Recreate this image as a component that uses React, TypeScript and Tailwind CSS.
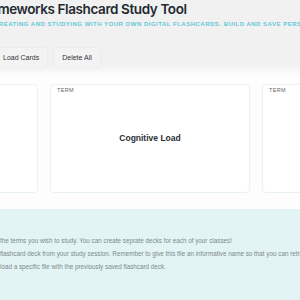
export default function App() {
  const notes = [
    "the terms you wish to study. You can create seprate decks for each of your classes!",
    "flashcard deck from your study session. Remember to give this file an informative name so that you can retrieve it later.",
    "load a specific file with the previously saved flashcard deck.",
  ];

  return (
    <div className="h-[300px] w-[300px] overflow-hidden bg-[#fcfdfc] font-['Liberation_Sans',Arial,sans-serif]">
      {/* header */}
      <div className="h-[76px] bg-gradient-to-b from-[#f1f1f1] from-85% to-[#fcfdfc]">
        <h1 className="-ml-[22px] whitespace-nowrap font-['Inter',sans-serif] text-[13.5px] leading-[18px] font-semibold tracking-[-0.4px] text-[#1e2a30]">
          Frameworks Flashcard Study Tool
        </h1>
        <p className="-ml-[6px] mt-[2px] whitespace-nowrap text-[6px] leading-[8px] font-bold tracking-[0.5px] text-[#62c8d8]">
          CREATING AND STUDYING WITH YOUR OWN DIGITAL FLASHCARDS. BUILD AND SAVE PERSONAL DECKS.
        </p>
        <div className="-ml-[5px] mt-[20px] flex gap-[7px]">
          <button className="h-[20px] rounded-[2px] bg-[#f3f3f3] px-[8px] text-[7px] text-[#333] shadow-[0_0_2px_rgba(0,0,0,0.08)]">
            Load Cards
          </button>
          <button className="h-[20px] rounded-[2px] bg-[#f3f3f3] px-[8px] text-[7px] text-[#333] shadow-[0_0_2px_rgba(0,0,0,0.08)]">
            Delete All
          </button>
        </div>
      </div>

      {/* cards */}
      <div className="mt-[8px] flex justify-center gap-[12px]">
        {["", "Cognitive Load", ""].map((t, i) => (
          <div
            key={i}
            className="relative flex h-[109px] w-[200px] shrink-0 items-center justify-center rounded-[4px] border border-[#e9f3f4] bg-white"
          >
            <span className="absolute left-[6px] top-[1px] text-[5.5px] tracking-[0.3px] text-[#666]">TERM</span>
            <span className="text-[8.5px] font-bold text-[#2a2f33]">{t}</span>
          </div>
        ))}
      </div>

      {/* instructions */}
      <div className="mt-[16px] h-[92px] bg-[#e3f4f5] pt-[25px]">
        {notes.map((n, i) => (
          <p key={i} className="whitespace-nowrap text-[6.3px] leading-[13px] text-[#7c8a8c]">
            {n}
          </p>
        ))}
      </div>
    </div>
  );
}
